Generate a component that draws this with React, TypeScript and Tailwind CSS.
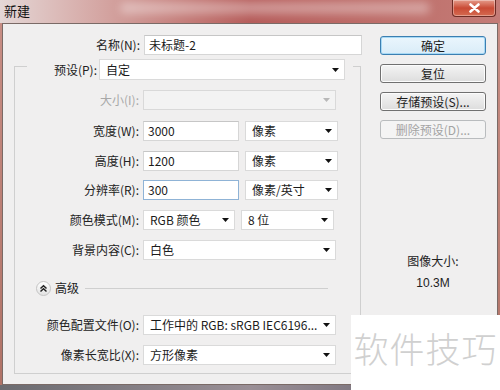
const font = "font-['Noto_Sans_CJK_SC','Noto_Sans',sans-serif]";

function Arrow({ disabled }: { disabled?: boolean }) {
  return (
    <svg width="7" height="4" viewBox="0 0 7 4" className="shrink-0">
      <polygon points="0,0 7,0 3.5,4" fill={disabled ? "#b8b8b8" : "#111"} />
    </svg>
  );
}

function Input({ value, w, focus }: { value: string; w: string; focus?: boolean }) {
  return (
    <div
      className={`${w} h-[20px] flex items-center pl-[4px] bg-white border text-[12px] text-[#1b1b1b] ${
        focus ? "border-[#8fb3d6]" : "border-[#d6d6d6] border-t-[#c6c6c6]"
      }`}
    >
      {value}
    </div>
  );
}

function Select({ value, w, disabled }: { value: string; w: string; disabled?: boolean }) {
  return (
    <div
      className={`${w} h-[20px] flex items-center pl-[6px] pr-[5px] border text-[12px] ${
        disabled
          ? "bg-[#f3f3f3] border-[#d9d9d9] text-[#9a9a9a]"
          : "bg-white border-[#dadada] text-[#1b1b1b]"
      }`}
    >
      <span className="flex-1 truncate">{value}</span>
      <Arrow disabled={disabled} />
    </div>
  );
}

function Row({
  label,
  mt,
  disabled,
  children,
}: {
  label: string;
  mt: string;
  disabled?: boolean;
  children: React.ReactNode;
}) {
  return (
    <div className={`flex items-center h-[20px] ${mt}`}>
      <div
        className={`w-[124px] text-right text-[12px] ${
          disabled ? "text-[#a8a8a8]" : "text-[#222]"
        }`}
      >
        {label}
      </div>
      <div className="ml-[4px] flex items-center gap-[6px]">{children}</div>
    </div>
  );
}

function Button({
  label,
  mt,
  primary,
  disabled,
}: {
  label: string;
  mt?: string;
  primary?: boolean;
  disabled?: boolean;
}) {
  return (
    <div
      className={`w-[106px] h-[19px] flex items-center justify-center rounded-[3px] border text-[12px] ${mt ?? ""} ${
        disabled
          ? "border-[#b9bcbe] bg-[#f4f4f4] text-[#a3a3a3]"
          : primary
          ? "border-[#3c7fb1] bg-gradient-to-b from-[#eaf6fd] to-[#d9ecf8] text-[#1b1b1b] shadow-[inset_0_0_0_1px_#a7d9f5]"
          : "border-[#707070] bg-gradient-to-b from-[#f4f4f4] to-[#dddddd] text-[#1b1b1b] shadow-[inset_0_0_0_1px_#fcfcfc]"
      }`}
    >
      {label}
    </div>
  );
}

export default function App() {
  return (
    <div
      className={`${font} relative w-[500px] h-[390px] overflow-hidden bg-gradient-to-b from-[#c98f86] to-[#b07266]`}
    >
      {/* Title bar */}
      <div className="relative h-[23px] flex items-start bg-gradient-to-r from-[#e4d7d6] via-[#b65d5b] to-[#c47c77]">
        <div className="absolute left-[120px] top-[2px] w-[310px] h-[12px] rounded-full bg-white/35 blur-[4px]" />
        <span className="relative ml-[4px] mt-[2px] text-[13px] leading-[18px] text-[#111]">新建</span>
        <div className="relative ml-auto mr-[4px] w-[44px] h-[17px] flex items-center justify-center rounded-b-[4px] border border-t-0 border-[#6d2b24] bg-gradient-to-b from-[#e49a8a] via-[#c94a35] to-[#d56a50] shadow-[inset_0_0_0_1px_rgba(255,255,255,0.35)]">
          <svg width="11" height="10" viewBox="0 0 11 10">
            <path d="M1.5 1.5 L9.5 8.5 M9.5 1.5 L1.5 8.5" stroke="#fff" strokeWidth="2.6" strokeLinecap="round" />
          </svg>
        </div>
      </div>

      {/* Client area */}
      <div className="ml-[2px] w-[496px] h-[362px] border border-[#7a6a66] bg-[#f0efef] flex">
        {/* Left column */}
        <div className="w-[359px] flex flex-col">
          <div className="mt-[11px] flex items-center h-[20px]">
            <div className="w-[137px] text-right text-[12px] text-[#222]">名称(N):</div>
            <div className="ml-[4px]">
              <Input value="未标题-2" w="w-[218px]" />
            </div>
          </div>

          {/* Group box */}
          <div className="mt-[11px] ml-[11px] w-[347px] h-[308px] border border-[#cfcfcf] flex flex-col">
            <div className="-mt-[8px] ml-[12px] w-[326px] h-[21px] bg-[#f0efef] flex items-center">
              <div className="w-[70px] text-right text-[12px] text-[#222]">预设(P):</div>
              <div className="ml-[2px]">
                <Select value="自定" w="w-[246px] h-[21px]" />
              </div>
            </div>

            <Row label="大小(I):" mt="mt-[10px]" disabled>
              <Select value="" w="w-[193px]" disabled />
            </Row>
            <Row label="宽度(W):" mt="mt-[11px]">
              <Input value="3000" w="w-[96px]" />
              <Select value="像素" w="w-[93px]" />
            </Row>
            <Row label="高度(H):" mt="mt-[10px]">
              <Input value="1200" w="w-[96px]" />
              <Select value="像素" w="w-[93px]" />
            </Row>
            <Row label="分辨率(R):" mt="mt-[9px]">
              <Input value="300" w="w-[96px]" focus />
              <Select value="像素/英寸" w="w-[93px]" />
            </Row>
            <Row label="颜色模式(M):" mt="mt-[10px]">
              <Select value="RGB 颜色" w="w-[92px]" />
              <Select value="8 位" w="w-[93px]" />
            </Row>
            <Row label="背景内容(C):" mt="mt-[10px]">
              <Select value="白色" w="w-[193px]" />
            </Row>

            {/* Advanced */}
            <div className="mt-[20px] h-[16px] flex items-center">
              <div className="ml-[21px] w-[15px] h-[15px] rounded-full border border-[#c4c4c4] bg-gradient-to-b from-[#ffffff] to-[#e2e2e2] flex items-center justify-center">
                <svg width="9" height="9" viewBox="0 0 9 9">
                  <path d="M1.5 4.5 L4.5 1.8 L7.5 4.5 M1.5 7.5 L4.5 4.8 L7.5 7.5" stroke="#222" strokeWidth="1.5" fill="none" />
                </svg>
              </div>
              <span className="ml-[4px] text-[12px] text-[#222]">高级</span>
              <div className="ml-[6px] w-[243px] h-px bg-[#cfcfcf]" />
            </div>

            <Row label="颜色配置文件(O):" mt="mt-[19px]">
              <Select value="工作中的 RGB: sRGB IEC6196..." w="w-[193px]" />
            </Row>
            <Row label="像素长宽比(X):" mt="mt-[10px]">
              <Select value="方形像素" w="w-[193px]" />
            </Row>
          </div>
        </div>

        {/* Right column */}
        <div className="ml-[18px] w-[106px] flex flex-col items-center">
          <Button label="确定" mt="mt-[12px]" primary />
          <Button label="复位" mt="mt-[9px]" />
          <Button label="存储预设(S)..." mt="mt-[9px]" />
          <Button label="删除预设(D)..." mt="mt-[9px]" disabled />
          <div className="mt-[114px] text-[12px] leading-[16px] text-[#222]">图像大小:</div>
          <div className="mt-[6px] text-[12px] leading-[16px] text-[#222] font-['Liberation_Sans',sans-serif]">10.3M</div>
        </div>
      </div>

      {/* Bottom edge */}
      <div className="h-[6px] bg-gradient-to-r from-[#6b6b70] via-[#9a8f96] to-[#5e5a66]" />

      {/* Watermark */}
      <div className="absolute left-[351px] top-[315px] w-[149px] h-[75px] bg-white flex items-start justify-center pt-[13px]">
        <span className="text-[35px] leading-[40px] font-light text-[#d0d0d0] tracking-[1px]">软件技巧</span>
      </div>
    </div>
  );
}
